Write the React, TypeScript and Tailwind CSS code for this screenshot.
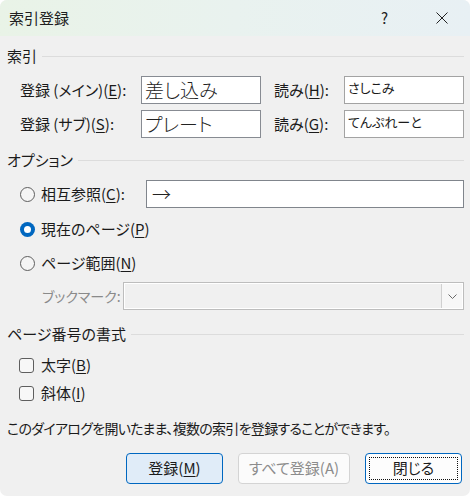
import React from "react";

const U = ({ c }: { c: string }) => (
  <span className="underline underline-offset-[2px] decoration-[1px]">{c}</span>
);

const SectionHeader = ({ title }: { title: string }) => (
  <div className="flex items-center h-[20px] pl-[7px] pr-[6px]">
    <span className="leading-[20px]">{title}</span>
    <div className="flex-1 h-px bg-[#dcdcdc] ml-[5px]" />
  </div>
);

const Radio = ({ checked }: { checked?: boolean }) =>
  checked ? (
    <span className="w-[15px] h-[15px] rounded-full bg-[#0067c0] flex items-center justify-center shrink-0">
      <span className="w-[7px] h-[7px] rounded-full bg-white" />
    </span>
  ) : (
    <span className="w-[15px] h-[15px] rounded-full border border-[#5e5e5e] bg-[#f5f5f5] shrink-0" />
  );

const Check = () => (
  <span className="w-[15px] h-[15px] rounded-[3px] border border-[#5e5e5e] bg-[#f7f7f7] shrink-0" />
);

export default function App() {
  return (
    <div className="w-[470px] h-[496px] bg-white">
      <div className="w-[470px] h-[496px] bg-[#f0f0f0] rounded-[7px] overflow-hidden font-['Noto_Sans_CJK_JP',sans-serif] text-[15px] text-[#1b1b1b] [font-feature-settings:'palt'] flex flex-col">
        {/* Title bar */}
        <div className="h-[36px] flex items-center bg-gradient-to-r from-[#e9f3e7] via-[#e9f2ef] to-[#e8f0f4]">
          <span className="pl-[9px] flex-1 text-[15px] text-[#202020]">索引登録</span>
          <div className="w-[57px] h-full flex items-center justify-center text-[15px] text-[#222]">?</div>
          <div className="w-[57px] h-full flex items-center justify-center">
            <svg width="12" height="12" viewBox="0 0 12 12">
              <path d="M0.5 0.5 L11.5 11.5 M11.5 0.5 L0.5 11.5" stroke="#222" strokeWidth="1" fill="none" />
            </svg>
          </div>
        </div>

        {/* 索引 */}
        <div className="mt-[10px]">
          <SectionHeader title="索引" />
        </div>
        <div className="mt-[10px] flex flex-col gap-[6px] pr-[6px]">
          <div className="flex items-center h-[28px]">
            <span className="w-[141px] pl-[20px] shrink-0">
              登録 (メイン)(<U c="E" />):
            </span>
            <div className="w-[120px] h-[28px] border border-[#878b92] bg-white flex items-center pl-[3px] text-[19px] font-light text-[#222] shrink-0">
              差し込み
            </div>
            <span className="w-[83px] pl-[13px] shrink-0">
              読み(<U c="H" />):
            </span>
            <div className="w-[120px] h-[28px] border border-[#a3a3a3] bg-white pl-[3px] pt-[2px] text-[13px] leading-[18px] shrink-0">
              さしこみ
            </div>
          </div>
          <div className="flex items-center h-[28px]">
            <span className="w-[141px] pl-[20px] shrink-0">
              登録 (サブ)(<U c="S" />):
            </span>
            <div className="w-[120px] h-[28px] border border-[#878b92] bg-white flex items-center pl-[3px] text-[19px] font-light text-[#222] shrink-0">
              プレート
            </div>
            <span className="w-[83px] pl-[13px] shrink-0">
              読み(<U c="G" />):
            </span>
            <div className="w-[120px] h-[28px] border border-[#a3a3a3] bg-white pl-[3px] pt-[2px] text-[13px] leading-[18px] shrink-0">
              てんぷれーと
            </div>
          </div>
        </div>

        {/* オプション */}
        <div className="mt-[12px]">
          <SectionHeader title="オプション" />
        </div>
        <div className="mt-[10px] flex items-center h-[28px] pr-[6px]">
          <div className="w-[146px] pl-[20px] flex items-center gap-[6px] shrink-0">
            <Radio />
            <span>
              相互参照(<U c="C" />):
            </span>
          </div>
          <div className="flex-1 h-[28px] border border-[#80858c] bg-white flex items-center pl-[5px] text-[19px] font-light text-[#222] [font-feature-settings:normal]">
            →
          </div>
        </div>
        <div className="mt-[9px] flex items-center h-[24px] pl-[20px] gap-[6px]">
          <Radio checked />
          <span>
            現在のページ(<U c="P" />)
          </span>
        </div>
        <div className="mt-[10px] flex items-center h-[24px] pl-[20px] gap-[6px]">
          <Radio />
          <span>
            ページ範囲(<U c="N" />)
          </span>
        </div>
        <div className="mt-[7px] flex items-center h-[28px] pr-[6px]">
          <span className="w-[123px] pl-[42px] shrink-0 text-[14px] text-[#8a8a8a]">ブックマーク:</span>
          <div className="flex-1 h-[28px] border border-[#bdbdbd] bg-[#f0f0f0] shadow-[inset_0_0_0_1px_#ffffff] flex justify-end p-px">
            <div className="w-[21px] h-full bg-[#f7f7f7] border-l border-[#d0d0d0] flex items-center justify-center">
              <svg width="9" height="5" viewBox="0 0 9 5">
                <path d="M0.5 0.5 L4.5 4.5 L8.5 0.5" stroke="#6a6a6a" strokeWidth="1" fill="none" />
              </svg>
            </div>
          </div>
        </div>

        {/* ページ番号の書式 */}
        <div className="mt-[14px]">
          <SectionHeader title="ページ番号の書式" />
        </div>
        <div className="mt-[9px] flex items-center h-[24px] pl-[19px] gap-[7px]">
          <Check />
          <span>
            太字(<U c="B" />)
          </span>
        </div>
        <div className="mt-[4px] flex items-center h-[24px] pl-[19px] gap-[7px]">
          <Check />
          <span>
            斜体(<U c="I" />)
          </span>
        </div>

        <div className="mt-[13px] h-[20px] pl-[7px] flex items-center text-[14px] tracking-[-0.7px]">
          このダイアログを開いたまま、複数の索引を登録することができます。
        </div>

        <div className="mt-[15px] flex justify-end gap-[15px] pr-[8px]">
          <div className="w-[97px] h-[31px] rounded-[4px] border border-[#0067c0] bg-[#e0ecf8] flex items-center justify-center">
            <span>
              登録(<U c="M" />)
            </span>
          </div>
          <div className="w-[112px] h-[31px] rounded-[4px] border border-[#d4d4d4] bg-[#fbfbfb] flex items-center justify-center text-[#8c8c8c]">
            すべて登録(A)
          </div>
          <div className="w-[97px] h-[31px] rounded-[4px] border border-[#0067c0] bg-[#fdfdfd] p-[3px]">
            <div className="w-full h-full border border-dotted border-[#111] flex items-center justify-center">
              閉じる
            </div>
          </div>
        </div>
      </div>
    </div>
  );
}
